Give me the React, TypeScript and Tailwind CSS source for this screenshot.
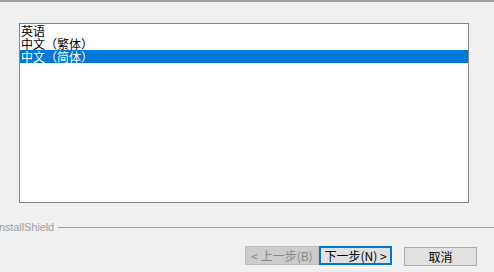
import React from "react";

const languages = ["英语", "中文（繁体）", "中文（简体）"];

export default function App() {
  const selected = 2;
  return (
    <div
      className="w-[494px] h-[272px] overflow-hidden bg-[#f0f0f0] border-t-2 border-[#a0a0a0] flex flex-col"
      style={{ fontFamily: '"Liberation Sans", "Noto Sans CJK SC", sans-serif' }}
    >
      {/* language list */}
      <div className="ml-[19px] mt-[21px] w-[450px] h-[180px] bg-white border border-[#828790] pt-px">
        {languages.map((lang, i) => (
          <div
            key={lang}
            className={
              (i === 0 ? "h-[12px] " : "h-[13px] ") +
              "flex items-center pl-[1px] text-[12px] leading-[12px] [font-family:'Noto_Sans_CJK_SC',sans-serif] " +
              (i === selected ? "bg-[#0078d7] text-white" : "text-black")
            }
          >
            {lang}
          </div>
        ))}
      </div>

      {/* InstallShield divider */}
      <div className="mt-[18px] flex items-center -ml-[4px]">
        <span className="text-[11px] leading-[12px] text-[#a0a0a0] tracking-[-0.1px]">InstallShield</span>
        <div className="ml-[4px] flex-1 h-px bg-[#a0a0a0]" />
      </div>

      {/* buttons */}
      <div className="mt-[13px] flex items-start text-[12px] [font-family:'Noto_Sans_CJK_SC',sans-serif]">
        <div className="ml-[245px] w-[74px] h-[19px] bg-[#cccccc] border border-[#bfbfbf] text-[#8a8a8a] flex items-center justify-center leading-[12px]">
          &lt; 上一步(B)
        </div>
        <div className="w-[73px] h-[19px] bg-[#e1e1e1] border-2 border-[#0078d7] text-black flex items-center justify-center leading-[12px]">
          下一步(N) &gt;
        </div>
        <div className="ml-[12px] mt-px w-[73px] h-[19px] bg-[#e1e1e1] border border-[#adadad] text-black flex items-center justify-center leading-[12px]">
          取消
        </div>
      </div>
    </div>
  );
}
